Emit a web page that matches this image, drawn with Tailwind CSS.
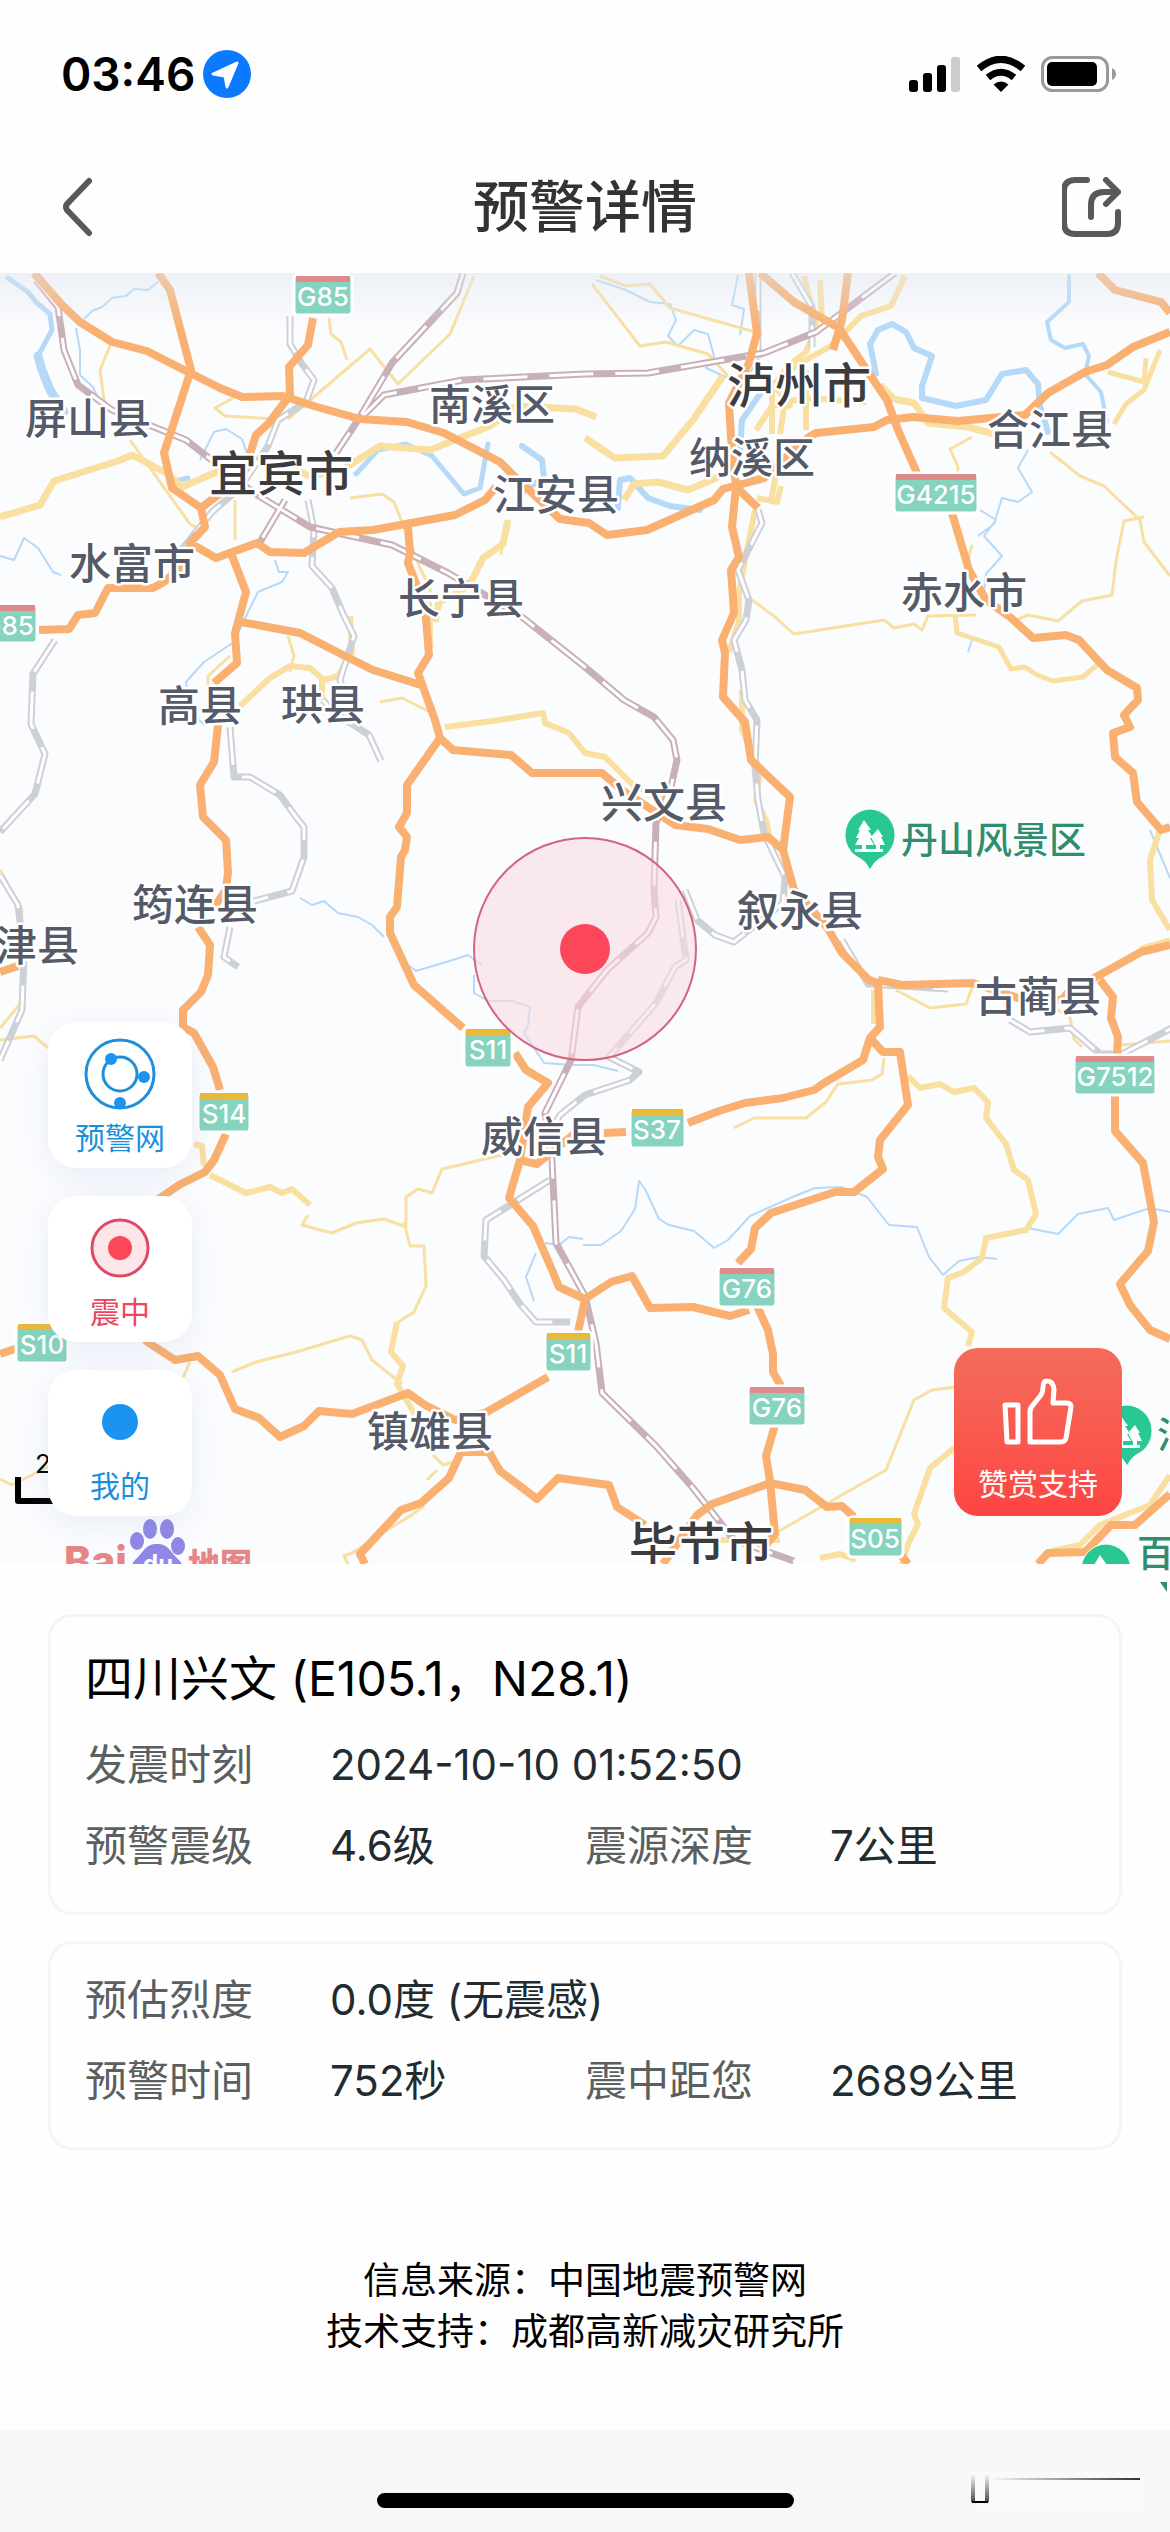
<!DOCTYPE html>
<html lang="zh-CN">
  <head>
    <meta charset="UTF-8">
    <meta name="viewport" content="width=device-width, initial-scale=1.0">
    <title>预警详情</title>
    <script src="https://cdn.jsdelivr.net/npm/@tailwindcss/browser@4"></script>
  </head>
  <body class="min-h-screen flex flex-col bg-[#fefefe] font-['Inter','Noto_Sans_CJK_SC',sans-serif]">
    <!-- status bar -->
    <div class="flex items-center justify-between h-[140px] pt-2 pl-[61px] pr-[53px]">
      <div class="flex items-center gap-2">
        <span class="text-[46px] leading-none font-semibold text-black">03:46</span>
        <svg class="w-12 h-12" viewBox="0 0 48 48">
          <circle cx="24" cy="24" r="24" fill="#0a7aff" />
          <path d="M34 13L10 24l12 2 2 11z" fill="#fff" stroke="#fff" stroke-width="3" stroke-linejoin="round" />
        </svg>
      </div>
      <div class="flex items-center gap-4">
        <svg class="w-[52px] h-9" viewBox="0 0 52 36">
          <rect x="0" y="24" width="9" height="12" rx="3" />
          <rect x="14" y="17" width="9" height="19" rx="3" />
          <rect x="28" y="9" width="9" height="27" rx="3" />
          <rect x="42" y="1" width="9" height="35" rx="3" fill="#ccc" />
        </svg>
        <svg class="w-12 h-9" viewBox="0 0 48 36">
          <path d="M2 12.500Q24-6 46 12.500" fill="none" stroke="#000" stroke-width="7" />
          <path d="M11 21.500Q24 11 37 21.500" fill="none" stroke="#000" stroke-width="7" />
          <path d="M24 36l-7.500-7.500q7.500-6 15 0z" />
        </svg>
        <svg class="w-[76px] h-9" viewBox="0 0 76 36">
          <rect x="1.500" y="1.500" width="65" height="33" rx="10" fill="none" stroke="#999" stroke-width="3" />
          <rect x="6" y="6" width="50" height="24" rx="5" />
          <path d="M71 12q4 2 4 6t-4 6z" fill="#999" />
        </svg>
      </div>
    </div>

    <!-- nav bar -->
    <header class="flex items-center justify-between h-[133px] px-12">
      <button type="button" aria-label="返回" class="w-[60px] h-[60px]">
        <svg class="w-[54px] h-[60px]" viewBox="0 0 54 60" fill="none" stroke="#58595a" stroke-width="6" stroke-linecap="round" stroke-linejoin="round">
          <path d="M41 4L19 27q-2 3 0 6l22 23" />
        </svg>
      </button>
      <h1 class="text-[56px] leading-none font-medium text-[#333]">预警详情</h1>
      <button type="button" aria-label="分享" class="w-[60px] h-[60px]">
        <svg class="w-[60px] h-[60px]" viewBox="0 0 60 60" fill="none" stroke="#58595a" stroke-width="6" stroke-linecap="round" stroke-linejoin="round">
          <path d="M25 3H13Q2 3 2 14v32q0 11 11 11h32q11 0 11-11V35" />
          <path d="M29 40V28q0-13 13-13h14M44 3l12 12-12 12" />
        </svg>
      </button>
    </header>

    <!-- map -->
    <main class="relative">
      <svg class="block w-full h-auto overflow-visible" viewBox="0 273 1170 1291" fill="none" stroke-linejoin="round">
        <defs>
          <clipPath id="frame"><rect x="0" y="273" width="1170" height="1291" /></clipPath>
          <linearGradient id="shade" x1="0" y1="0" x2="0" y2="1">
            <stop offset="0" stop-color="#dfe6ee" stop-opacity=".5" />
            <stop offset="1" stop-color="#dfe6ee" stop-opacity="0" />
          </linearGradient>
          <symbol id="pin" viewBox="0 0 54 64" overflow="visible">
            <path d="M27 1a26 26 0 0 1 9 50q-5 3-9 11-4-8-9-11a26 26 0 0 1 9-50z" fill="#28c794" stroke="#fff" stroke-width="1" />
            <path d="M21 12l7 10h-3l5 8h-3l4 7h-8v4h17v3H12v-3h7v-4h-7l4-7h-3l4-8h-2zM35 21l5 8h-2l4 8h-5v4h-4v-4h-1l-4-8z" fill="#fff" />
          </symbol>
          <g id="rail-local">
            <path d="M290 316v28l12 20 12 16-8 22-28 18-10 26-28 42-28 24-24 30-20 22" />
            <path d="M308 500l6 30-2 36 20 22 12 28 10 20-14 44 6 20M55 640l-22 34-2 50 14 30-10 40-35 38M230 727l4 50 16 0 30 18 16 22 8 10v30l-12 34-38 10M230 927l-6 30 14 10M323 700l8 10 38 25 12 26M0 875l18 30 6 50-2 55-22 50" />
            <path d="M758 510L762 523 738 570 749 600 746 620 734 640 742 670 745 700 757 720 755 767 758 800 764 833 785 877 783 903 734 942 715 935 697 920 685 890" />
            <path d="M678 900L686 960 675 967 656 1003 609 1057 639 1072 630 1080 585 1095 560 1115 548 1135M550 1180l-64 40-2 36 20 24 16 24 16 18h34M842 940l26 44 80 5M1010 1020l20 12 40-4 30 26 22 0 50-26M758 273v85M792 273l20 34v40" />
          </g>
          <g id="rail-main">
            <path d="M36 280L58 307 64 350 78 385 112 410 186 440 254 493 310 527 392 545 448 573 522 617 585 667 624 700 654 717 673 740 677 760 671 787 656 823 654 890 656 917 648 933 607 970 585 998 578 1007 571 1060 545 1113 552 1160 556 1243 585 1296 596 1343 602 1393 656 1446 693 1488 734 1540 794 1561" />
            <path d="M463 273L457 293 392 363 358 420 336 453M362 417L384 395 463 380 585 374 648 373 764 353 816 332 895 273M285 500l-25 42" />
          </g>
        </defs>
        <g clip-path="url(#frame)">
          <rect x="0" y="273" width="1170" height="1291" fill="#fbfcfe" />

          <!-- rivers -->
          <g stroke="#b5d9f7" stroke-width="2">
            <path d="M158 282l-10 8-14-1-8 7-14 2-10 9-10 4-8 8M76 328l4 22v25l13 12 8 18M200 460l14-28 12-3 16 10 6 18M0 556l14 4 10-22 14 10 15 24 8 3M275 560l4 12 9 0-6 10-24 10-10 20-14 30-30 20-18 20 4 30 16 14" />
            <path d="M596 280l30 10 24 12 20 2 6 16-8 16 10 10 16-16 14 4 6 22-8 12 22 10 20-2 12-20-4-20M738 275l-6 30 12 4-4 26" />
            <path d="M1028 450l-10 18 14 24-14 10-16-4-8 26-16 12M980 510l16 10-12 16 18 20-16 18-2 18M972 640l-4 12" />
            <path d="M300 898l12 7 12-4 14 12 20 4 14 8 12 12M408 965l8 6 40-12 12-4 14 10M474 975l0 18 14 8 24 0 18 6-2 18-4 8 20 30 30 2 20 0 24 6M583 1245l18 0 20-14 14-22 4-28 6 8 14 30 10 6 25 6 20 17 14-8 22-24 45-20 20-8 26-1 26 10 22 28 28 2 12 30 14 18 16-14 20-4 18 2" />
            <path d="M1028 1228l30 6 20-20 30-6 6 12 36-12 20 4M545 1243l14 2 10-8 14 2M536 1253l-10 24 8 24M1150 830l20 48" />
          </g>
          <g stroke="#b5d9f7" stroke-linecap="round">
            <path d="M8 278l20 14 8 10 14 12 2 16-14 26" stroke-width="5" />
            <path d="M38 356l4 14 8 20 14 22" stroke-width="9" />
            <path d="M172 482l16-4M356 474l22-24 28-6 26 12 32 38 16-6 8-44" stroke-width="5" />
            <path d="M522 446l20 14 2 18-20 12-6 12M618 508l2-28 10-2 18 20 22 8 30 4M740 450l2-30 18-26" stroke-width="6" />
            <path d="M876 374l-6-30 8-14 14-6 14 8 8 16 18 8-10 30 0 12 34 8 30-6 16-26 24-4 12 14 2 22 8 26" stroke-width="6" />
            <path d="M1069 276l0 26-22 20 4 18 14 8 18-4 6 12-4 18 16 18 6 30" stroke-width="4" />
          </g>

          <!-- secondary roads -->
          <g stroke="#f8e0a2" stroke-width="3">
            <path d="M110 346l-10 24 4 30 6 10M329 318l2 16 10 8 6 18M474 276l-24 58-52 50-28-35-82 70M233 398l-18 10 10 8 50 3M130 440l60 84 12 6M235 540v-40M350 498l32-4 12 8 26 66 10 20 2 60M592 284l48 62 26-4 42 12 20 22M600 276l26 10 24-2 20 24 92 26M505 525l-4 30" />
            <path d="M972 437l-22 12 8 18-2 26M972 545l-6 22M1050 452l30 24 24 10 36 34 4 22 26 34M1144 517l-20 4-8 40-4 34-30 6-24 20-30-6-14 6M752 600l22 16 20 18 90-14 10 8 20-4 8 6 6-14 48-1" />
            <path d="M380 702l22-4 28 14M290 672l4-16-6-20M208 690l0-14 22-20M0 870l22 40-4 40M24 970l-4 34-20 24M0 1040l34-4 14 12" />
            <path d="M896 990l34 18 36-4 8-22M884 1058l-2 16-10 6-34 4-12 18-20 16-52 0-20 10M1050 1005l20 12 4 22 8 8M1120 1045l50-4" />
            <path d="M308 1215l-6 10 30 8 24-10 28-4 22 8 0-30 12-8 14 4 10-24 60-14 24-14h16M404 1222l6 24h14l2 40-12 26-16 10M232 1372l24-10 40-10 54-16 12 4 10 20 30 24M190 1362l-8 18M433 1455l10 10 14-4M427 1480l10-10M424 1506l-14 10-36 22-20 14-10 4 4 8" />
            <path d="M774 1534l80-46 32-18 28-70 18-10 32-4M0 1479l12 6 40-20" />
          </g>
          <g stroke="#fae0a0" stroke-width="7">
            <path d="M0 517l40-12 14-24 64-20 14-6 34 18 14 12M180 488l50-22 20 4M290 468l20 8 30-5 40-25 50 4 60-24 26-20 60 3 20 8M508 520l-5 24-20 14-14 28-30 16-4 20" />
            <path d="M585 438l30 20 48-2 30-36 30-44M624 500l10-16 24-2 30 8 28-12 20-20M880 385l14 14 20 4 14 20 40 4 30 8" />
            <path d="M804 276l12 50-10 26-18 14-14 20M820 280l2 40M905 276l-14 30-30 10-30 30-36 20-20 20 16 22M806 430v-60M756 430l16-24 32-8 62 4M772 434l0-54M790 370l-10 64M771 500l6-30 20-30M757 498l20 4 4-16" stroke-width="6" />
            <path d="M1160 350l-16 40-18 14-12 20M1108 372l36 10 2-24M955 615l2 18 42 14 12 22 14-2 12 8 16 6 30-4 14-12" stroke-width="5" />
            <path d="M240 706l30-28 20-12 20 2 14 12 14-4 14-24-2-36M322 680v20M445 727l48-6 50-8 2 10 24 10 16 20 20 4 30 30 30 10" stroke-width="6" />
            <path d="M755 510l-10 50-6 32 0 30-10 30M742 690l0 40 18 40-4 30 10 20 4 20" stroke-width="6" />
            <path d="M874 990v34M908 1076l12 12 20-4 14 8 20-4 14 14-2 16 20 26 8 26 14 10 8 34-10 16-40 8-4 20-18 14-16 6-4 30 28 24-4 14M1160 830l-10 30 2 40 18 30M1170 940l-30 9" stroke-width="6" />
            <path d="M194 1144l8 2 2 20M210 1175l36 18 24-6 12 6 10-4 18 16M397 1322l-6 30 12 14-6 18 20 34M954 1448l-24 20-16 46 4 10-10 20-6 20M1170 1475l-20 30-50 20-20 20-28 6M660 1540l120 0M820 1558l20-4 16 6" stroke-width="6" />
          </g>

          <!-- railways: coloured casing with a dashed white core -->
          <use href="#rail-local" stroke="#cdd0d6" stroke-width="7" />
          <use href="#rail-local" stroke="#fff" stroke-width="3" stroke-dasharray="38 20" />
          <use href="#rail-main" stroke="#c8b0b8" stroke-width="7" />
          <use href="#rail-main" stroke="#fff" stroke-width="3" stroke-dasharray="44 22" />

          <!-- expressways -->
          <g stroke="#f9b071" stroke-width="8">
            <path d="M34 273L62 305 80 322 112 342 147 351 186 371 220 388 242 397 283 396 317 407 360 419 407 422 444 433 500 462 515 477 560 519 589 523 607 535 647 530 714 500 723 489 764 478 809 437 816 433 874 427 887 420 913 417 958 421 1025 415 1048 393 1085 372 1107 365 1133 347 1170 332" />
            <path d="M158 273L170 290 191 370 164 453 172 488 201 508 205 527 190 543 216 558 257 543 270 552 304 553 339 532 373 530 455 515 485 500 496 487M201 508L222 492M313 318L308 345 289 367 290 395 269 423 256 435 249 457" />
            <path d="M231 553L246 592 235 633 237 663 214 683M218 725L214 762 200 785 203 817 226 840 228 872 226 890 214 907M198 927L210 945 208 975 201 992 183 1010 183 1027 194 1033 213 1067 220 1090M226 1134L214 1160 205 1172 179 1185 160 1198 90 1240 100 1300 149 1343 175 1360 198 1356 220 1375 235 1409 259 1418 280 1437 304 1426 319 1411 352 1414 408 1393 425 1405 455 1420 485 1413 548 1377M0 1354L30 1344" />
            <path d="M241 622L300 633 347 657 373 670 421 685M408 527L410 553 408 563 425 607 429 655 418 673 435 720 440 738 453 750 511 755 532 773 602 773 622 790 675 825 708 829 740 840 768 837 783 850 794 890 827 927 842 953 869 980 878 983 880 1027 870 1038 863 1060 824 1083 814 1090 783 1098 745 1103 719 1111 688 1123M626 1132L604 1133" />
            <path d="M870 1038L883 1052 900 1052 908 1105 880 1140 878 1157 883 1169 854 1192 835 1192 771 1213 755 1228 751 1249 738 1263M757 1306L768 1330 773 1354 773 1372 781 1386M775 1425L766 1456 770 1481 775 1534 766 1545M578 1332L585 1299 611 1282 632 1276 650 1308 693 1307 730 1316 749 1310M663 1564L697 1515 712 1504 770 1483 805 1490 827 1507 842 1506 854 1517M902 1556L908 1564" />
            <path d="M645 1525L617 1507 609 1485 558 1478 537 1499 500 1471 489 1452 461 1452 449 1478 421 1503 401 1510 360 1554 365 1564" />
            <path d="M749 273L757 333 749 363 729 403 731 437 736 487 732 527 739 557 731 570 734 613 722 640 725 653 723 697 745 722 751 760 790 797 783 850M736 487L758 508M760 273L794 302 839 328 868 372 887 400 898 430 917 473M952 513L969 570 986 600 1010 617 1033 638 1066 635 1079 640 1107 670 1137 688 1138 700 1124 715 1130 727 1113 733 1115 757 1133 773 1137 802 1161 830 1170 827M848 273L842 320 833 350M1098 273L1115 290 1161 302 1170 313" />
            <path d="M183 565L164 582 153 588 108 588 95 613 78 615 69 629 39 630M440 738L407 785 407 813 399 827 407 837 405 850 401 857 397 907 390 917 390 933 414 985 463 1028M515 1053L526 1070 548 1083 528 1107 520 1160 509 1198 533 1226 552 1270 559 1287 585 1299M520 1160L537 1164 574 1134" />
            <path d="M878 980L902 985 973 983 1018 998 1062 1000 1070 990 1096 977 1141 952 1170 945M1100 980L1113 997 1111 1018 1118 1037 1117 1055M1115 1094L1115 1131 1143 1163 1154 1222 1148 1251 1120 1284 1130 1305 1150 1330 1170 1339M1038 1564L1048 1553 1085 1552 1111 1525 1135 1525 1170 1494M0 972L18 966" />
          </g>
          <rect x="0" y="273" width="1170" height="56" fill="url(#shade)" />

          <!-- road shields -->
          <g stroke="#fff" stroke-width="3" fill="#86d3bf">
            <rect x="294" y="275" width="58" height="40" rx="4" />
            <rect x="-20" y="604" width="57" height="39" rx="4" />
            <rect x="894" y="473" width="84" height="40" rx="4" />
            <rect x="464" y="1028" width="48" height="40" rx="4" />
            <rect x="198" y="1092" width="52" height="40" rx="4" />
            <rect x="16" y="1323" width="52" height="40" rx="4" />
            <rect x="630" y="1108" width="55" height="40" rx="4" />
            <rect x="1074" y="1055" width="82" height="40" rx="4" />
            <rect x="718" y="1267" width="58" height="40" rx="4" />
            <rect x="748" y="1386" width="58" height="40" rx="4" />
            <rect x="545" y="1332" width="47" height="40" rx="4" />
            <rect x="848" y="1517" width="55" height="40" rx="4" />
          </g>
          <path d="M296 279h54M0 608h35M896 477h80M1076 1059h78M720 1271h54M750 1390h54" stroke="#e08b8b" stroke-width="6" />
          <path d="M466 1032h44M200 1096h48M18 1327h48M632 1112h51M547 1336h43M850 1521h51" stroke="#e9b93a" stroke-width="6" />
          <g fill="#fff" font-size="26" font-weight="500" text-anchor="middle">
            <text x="323" y="306">G85</text>
            <text x="8" y="635">G85</text>
            <text x="936" y="504">G4215</text>
            <text x="488" y="1059">S11</text>
            <text x="224" y="1123">S14</text>
            <text x="42" y="1354">S10</text>
            <text x="657" y="1139">S37</text>
            <text x="1115" y="1086">G7512</text>
            <text x="747" y="1298">G76</text>
            <text x="777" y="1417">G76</text>
            <text x="568" y="1363">S11</text>
            <text x="875" y="1548">S05</text>
          </g>

          <!-- place names -->
          <g fill="#545a68" stroke="#fff" stroke-width="5" paint-order="stroke" font-size="42" font-weight="500" text-anchor="middle">
            <text x="88" y="434">屏山县</text>
            <text x="492" y="420">南溪区</text>
            <text x="556" y="510">江安县</text>
            <text x="132" y="579">水富市</text>
            <text x="461" y="614">长宁县</text>
            <text x="752" y="473">纳溪区</text>
            <text x="1050" y="445">合江县</text>
            <text x="964" y="608">赤水市</text>
            <text x="200" y="721">高县</text>
            <text x="323" y="720">珙县</text>
            <text x="664" y="818">兴文县</text>
            <text x="800" y="926">叙永县</text>
            <text x="195" y="920">筠连县</text>
            <text x="37" y="961">津县</text>
            <text x="1038" y="1012">古蔺县</text>
            <text x="544" y="1152">威信县</text>
            <text x="430" y="1447">镇雄县</text>
          </g>
          <g fill="#3c3c3e" stroke="#fff" stroke-width="5" paint-order="stroke" font-size="48" font-weight="500" text-anchor="middle">
            <text x="281" y="491">宜宾市</text>
            <text x="799" y="403">泸州市</text>
            <text x="701" y="1562">毕节市</text>
          </g>

          <!-- scenic spots -->
          <use href="#pin" x="843" y="808" width="54" height="64" />
          <use href="#pin" x="1100" y="1404" width="54" height="64" />
          <use href="#pin" x="1079" y="1543" width="54" height="64" />
          <g fill="#2f8d70" stroke="#fff" stroke-width="3" paint-order="stroke" font-size="37" font-weight="500">
            <text x="901" y="854">丹山风景区</text>
            <text x="1157" y="1449">泊</text>
          </g>

          <!-- epicentre -->
          <circle cx="585" cy="949" r="111" fill="#f9dbe3" fill-opacity=".6" stroke="#d2647f" stroke-width="2" />
          <circle cx="585" cy="949" r="25" fill="#fc465a" />

          <!-- scale and map logo -->
          <text x="35" y="1473" font-size="26" fill="#000">2</text>
          <path d="M18 1477v24h90" stroke="#000" stroke-width="6" />
          <g fill="#e88585" font-weight="800">
            <text x="64" y="1576" font-size="41">Bai</text>
            <text x="188" y="1576" font-size="32">地图</text>
          </g>
          <g fill="#9088e6">
            <ellipse cx="150" cy="1529" rx="7" ry="10" />
            <ellipse cx="167" cy="1529" rx="7" ry="10" />
            <ellipse cx="137" cy="1541" rx="7" ry="9" />
            <ellipse cx="178" cy="1546" rx="7" ry="9" />
            <path d="M157 1544c12 0 13 8 22 16 8 8 4 24-8 24h-28c-12 0-16-16-8-24 9-8 10-16 22-16z" />
            <text x="143" y="1572" font-size="24" fill="#fff" font-weight="700">du</text>
          </g>
        </g>
        <text x="1137" y="1567" font-size="37" font-weight="500" fill="#2f8d70">百</text>
        <path d="M1160 1582h7v10z" fill="#2f8d70" />
      </svg>

      <!-- map shortcuts -->
      <div class="absolute left-12 bottom-12 flex flex-col gap-7 text-[30px] leading-10">
        <button type="button" class="w-36 h-[146px] rounded-[28px] bg-white shadow-[0_8px_32px_rgba(120,150,200,0.15)] flex flex-col items-center pt-4 text-[#1a90dc]">
          <svg class="w-[72px] h-[72px]" viewBox="0 0 72 72">
            <g fill="none" stroke="#1f8fdb" stroke-width="3"><circle cx="36" cy="36" r="34" /><circle cx="36" cy="36" r="17" /></g>
            <g fill="#1a94f0"><circle cx="27" cy="21" r="6" /><circle cx="60" cy="39" r="6" /><circle cx="36" cy="65" r="6" /></g>
          </svg>
          <span class="mt-2">预警网</span>
        </button>
        <button type="button" class="w-36 h-[146px] rounded-[28px] bg-white shadow-[0_8px_32px_rgba(120,150,200,0.15)] flex flex-col items-center pt-4 text-[#ee4560]">
          <svg class="w-[72px] h-[72px]" viewBox="0 0 72 72">
            <circle cx="36" cy="36" r="28" fill="#fde6ea" stroke="#dc4a66" stroke-width="3" />
            <circle cx="36" cy="36" r="12" fill="#fc465a" />
          </svg>
          <span class="mt-2">震中</span>
        </button>
        <button type="button" class="w-36 h-[146px] rounded-[28px] bg-white shadow-[0_8px_32px_rgba(120,150,200,0.15)] flex flex-col items-center pt-4 text-[#1a90dc]">
          <svg class="w-[72px] h-[72px]" viewBox="0 0 72 72">
            <circle cx="36" cy="36" r="18" fill="#1a94f0" />
          </svg>
          <span class="mt-2">我的</span>
        </button>
      </div>
      <button type="button" class="absolute right-12 bottom-12 w-[168px] h-[168px] rounded-3xl bg-linear-to-b from-[#f46b5b] to-[#fd4443] flex flex-col items-center pt-7 text-[30px] leading-10 text-white">
        <svg class="w-[72px] h-[72px]" viewBox="0 0 72 72" fill="none" stroke="#fff" stroke-width="5" stroke-linejoin="round">
          <path d="M3 29h13v37H5z" />
          <path d="M28 66V36q0-4 3-7l8-10q2-3 2-8 0-6 4-6 6 0 7 8l-1 14h14q4 0 4 4l-5 31q-1 4-5 4z" />
        </svg>
        <span class="mt-4">赞赏支持</span>
      </button>
    </main>

    <!-- quake details -->
    <section class="flex flex-col gap-[26px] pt-[50px] px-12 text-[42px] leading-[48px]">
      <div class="rounded-3xl border-3 border-[#f4f5f6] px-[34px] pt-8 pb-[42px]">
        <h2 class="text-[48px] leading-[60px] text-black">四川兴文 (E105.1，N28.1)</h2>
        <dl class="grid grid-cols-[49fr_51fr_49fr_51fr] gap-y-[33px] mt-8 text-[#222b30]">
          <dt class="text-[#5a5f62]">发震时刻</dt>
          <dd class="col-span-3">2024-10-10 01:52:50</dd>
          <dt class="text-[#5a5f62]">预警震级</dt>
          <dd>4.6级</dd>
          <dt class="text-[#5a5f62]">震源深度</dt>
          <dd>7公里</dd>
        </dl>
      </div>
      <div class="rounded-3xl border-3 border-[#f4f5f6] px-[34px] pt-8 pb-[42px]">
        <dl class="grid grid-cols-[49fr_51fr_49fr_51fr] gap-y-[33px] text-[#222b30]">
          <dt class="text-[#5a5f62]">预估烈度</dt>
          <dd class="col-span-3">0.0度 (无震感)</dd>
          <dt class="text-[#5a5f62]">预警时间</dt>
          <dd>752秒</dd>
          <dt class="text-[#5a5f62]">震中距您</dt>
          <dd>2689公里</dd>
        </dl>
      </div>
    </section>

    <div class="grow pt-[105px] text-center text-[37px] leading-[51px] text-black">
      <p>信息来源：中国地震预警网</p>
      <p>技术支持：成都高新减灾研究所</p>
    </div>

    <!-- home indicator -->
    <footer class="relative flex justify-center items-end h-[102px] pb-6 bg-[#f5f7f9]">
      <div class="w-[417px] h-[15px] rounded-full bg-black"></div>
      <svg class="absolute right-6 bottom-5 w-44 h-10" viewBox="0 0 176 40">
        <defs>
          <linearGradient id="fade-y" x1="0" y1="0" x2="0" y2="1"><stop offset="0" stop-color="#000" stop-opacity="0" /><stop offset="1" stop-color="#000" stop-opacity=".7" /></linearGradient>
          <linearGradient id="fade-x"><stop offset="0" stop-color="#000" stop-opacity="0" /><stop offset="1" stop-color="#000" stop-opacity=".8" /></linearGradient>
        </defs>
        <rect width="173" height="38" fill="#f9f9fa" />
        <rect x="1" y="2" width="4" height="28" fill="url(#fade-y)" />
        <rect x="15" y="2" width="4" height="28" fill="url(#fade-y)" />
        <path d="M2 30h16" stroke="#000" stroke-width="2" />
        <rect x="20" y="6" width="150" height="2" fill="url(#fade-x)" />
      </svg>
    </footer>
  </body>
</html>
